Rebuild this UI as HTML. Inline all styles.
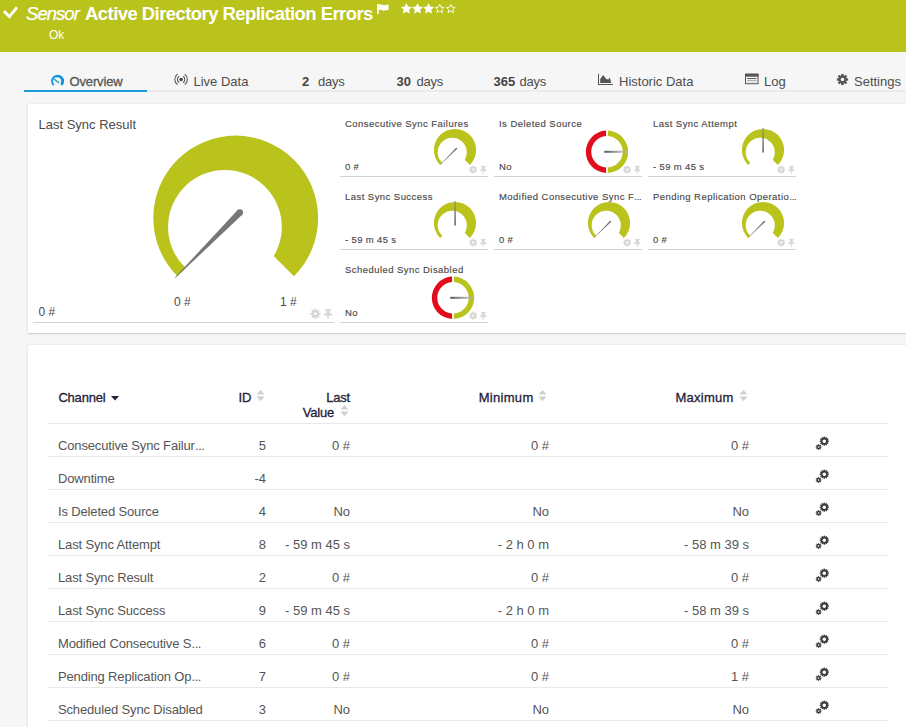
<!DOCTYPE html>
<html><head><meta charset="utf-8"><style>
*{margin:0;padding:0;box-sizing:border-box}
html,body{width:906px;height:727px;overflow:hidden;background:#f6f6f6;font-family:"Liberation Sans",sans-serif;}
.abs{position:absolute}
#hdr{position:absolute;left:0;top:0;width:906px;height:52px;background:#b9c31c}
.ht{position:absolute;color:#fff;white-space:nowrap;line-height:1}
.tab{position:absolute;top:75px;font-size:13px;color:#4d4d4d;white-space:nowrap;line-height:1}
.tab b{color:#444}
#tabline{position:absolute;left:24px;top:90px;width:882px;height:2px;background:#ebebeb}
#tabsel{position:absolute;left:24px;top:90px;width:123px;height:2px;background:#1a9ad6}
.panel{position:absolute;background:#fff;box-shadow:0 1px 1px rgba(0,0,0,0.12),0 0 3px rgba(0,0,0,0.09)}
.el2{letter-spacing:-0.2px}
.gt{position:absolute;font-size:9.5px;letter-spacing:0.45px;-webkit-text-stroke:0.15px #4a4a4a;color:#4a4a4a;white-space:nowrap;line-height:1}
.gv{position:absolute;font-size:9.5px;letter-spacing:0.35px;-webkit-text-stroke:0.15px #4a4a4a;color:#4a4a4a;white-space:nowrap;line-height:1}
.lbl{position:absolute;font-size:12px;color:#4a4a4a;white-space:nowrap;line-height:1}
.th{position:absolute;font-size:13px;letter-spacing:-0.2px;-webkit-text-stroke:0.3px #1f2237;color:#1f2237;white-space:nowrap;line-height:1}
.tr{position:absolute;left:48px;width:841px;height:33px;border-bottom:1px solid #e9e9e9}
.c{position:absolute;top:15px;font-size:13px;color:#555;white-space:nowrap;line-height:1}
.ch{left:10px;letter-spacing:-0.15px}
.el{letter-spacing:-0.5px;margin-left:0.3px}
.id{right:623px}
.lv{right:539px}
.mn{right:340px}
.mx{right:140px}
.gears{position:absolute;left:766px;top:12px}
</style></head><body>
<div id="hdr">
  <svg class="abs" style="left:3px;top:6px" width="17" height="13" viewBox="0 0 17 13"><path d="M0.9,5.0 L6.4,10.6 L14.0,1.4" fill="none" stroke="#fff" stroke-width="2.9"/></svg>
  <div class="ht" style="left:26px;top:5px;font-size:18.5px;font-style:italic;letter-spacing:-0.95px;-webkit-text-stroke:0.25px #fff">Sensor</div>
  <div class="ht" style="left:85px;top:5px;font-size:18.5px;font-weight:bold;letter-spacing:-0.56px">Active Directory Replication Errors</div>
  <svg class="abs" style="left:377px;top:4px" width="12" height="10" viewBox="0 0 12 10"><rect x="0" y="0" width="1.8" height="10" fill="#fff"/><path d="M1.8,0.5 C4,-0.3 6,1.8 8,1.2 C9.5,0.8 10.5,0.3 11.5,0.5 L11.5,6 C10,5.8 9,6.4 7.5,6.6 C5.5,6.9 4,5.4 1.8,6Z" fill="#fff"/></svg>
  <svg class="abs" style="left:401px;top:3px" width="57" height="11" viewBox="0 0 57 11">
    <path transform="translate(5.40,5.9)" d="M0.00,-5.30 L1.50,-2.06 L5.04,-1.64 L2.43,0.79 L3.12,4.29 L0.00,2.55 L-3.12,4.29 L-2.43,0.79 L-5.04,-1.64 L-1.50,-2.06Z" fill="#fff" stroke="#fff" stroke-width="0.5" stroke-linejoin="round"/><path transform="translate(16.50,5.9)" d="M0.00,-5.30 L1.50,-2.06 L5.04,-1.64 L2.43,0.79 L3.12,4.29 L0.00,2.55 L-3.12,4.29 L-2.43,0.79 L-5.04,-1.64 L-1.50,-2.06Z" fill="#fff" stroke="#fff" stroke-width="0.5" stroke-linejoin="round"/><path transform="translate(27.60,5.9)" d="M0.00,-5.30 L1.50,-2.06 L5.04,-1.64 L2.43,0.79 L3.12,4.29 L0.00,2.55 L-3.12,4.29 L-2.43,0.79 L-5.04,-1.64 L-1.50,-2.06Z" fill="#fff" stroke="#fff" stroke-width="0.5" stroke-linejoin="round"/><path transform="translate(38.70,5.9) scale(0.86)" d="M0.00,-5.30 L1.50,-2.06 L5.04,-1.64 L2.43,0.79 L3.12,4.29 L0.00,2.55 L-3.12,4.29 L-2.43,0.79 L-5.04,-1.64 L-1.50,-2.06Z" fill="none" stroke="#fff" stroke-width="1.1" stroke-linejoin="round"/><path transform="translate(49.80,5.9) scale(0.86)" d="M0.00,-5.30 L1.50,-2.06 L5.04,-1.64 L2.43,0.79 L3.12,4.29 L0.00,2.55 L-3.12,4.29 L-2.43,0.79 L-5.04,-1.64 L-1.50,-2.06Z" fill="none" stroke="#fff" stroke-width="1.1" stroke-linejoin="round"/>
  </svg>
  <div class="ht" style="left:49px;top:29px;font-size:12px">Ok</div>
</div>
<div id="tabline"></div><div id="tabsel"></div>
<svg class="abs" style="left:0;top:0" width="906" height="100">
 <path d="M57.65,81.15 L53.09,85.71 A6.45,6.45 0 1 1 62.21,85.71 Z " fill="#0d98d5"/><circle cx="57.05" cy="81.3" r="4.05" fill="#f6f6f6" fill="#0d98d5"/>
 <path d="M53.9,78.9 L58.6,82.6" stroke="#0d98d5" stroke-width="1.3" stroke-linecap="round"/>
 <g fill="none" stroke="#555" stroke-width="1.05"><path d="M179.14,76.26 A3.7,3.7 0 0 0 179.14,82.54 M183.06,76.26 A3.7,3.7 0 0 1 183.06,82.54 M177.49,74.24 A6.3,6.3 0 0 0 177.49,84.56 M184.71,74.24 A6.3,6.3 0 0 1 184.71,84.56 "/></g><circle cx="181.1" cy="79.4" r="1.75" fill="#444"/>
 <path d="M598,73.7 L599,73.7 L599,83.9 L612.8,83.9 L612.8,84.9 L598,84.9Z" fill="#555"/>
 <path d="M600.2,82.9 L600.2,78.9 L603.2,75 L606.4,79.2 L608.9,79.2 L609.8,77.2 L611.3,82.9Z" fill="#555"/>
 <rect x="745.5" y="74.2" width="12.5" height="9.5" fill="none" stroke="#555" stroke-width="1"/><rect x="745" y="73.7" width="13.5" height="3" fill="#555"/>
 <rect x="747" y="78.1" width="9.5" height="0.9" fill="#555"/><rect x="747" y="79.9" width="9.5" height="0.8" fill="#999"/><rect x="747" y="81.5" width="9.5" height="0.8" fill="#ccc"/>
 <g transform="translate(842.50,79.50)" fill="#555"><rect x="-1.15" y="-5.60" width="2.30" height="11.20" transform="rotate(0.00)"/><rect x="-1.15" y="-5.60" width="2.30" height="11.20" transform="rotate(45.00)"/><rect x="-1.15" y="-5.60" width="2.30" height="11.20" transform="rotate(90.00)"/><rect x="-1.15" y="-5.60" width="2.30" height="11.20" transform="rotate(135.00)"/><circle r="4.20"/><circle r="1.75" fill="#f6f6f6"/></g>
</svg>
<div class="tab" style="left:69.5px;letter-spacing:-0.15px;-webkit-text-stroke:0.3px #555;color:#555">Overview</div>
<div class="tab" style="left:193.5px">Live Data</div>
<div class="tab" style="left:302px"><b>2</b></div><div class="tab" style="left:318px;letter-spacing:-0.2px">days</div>
<div class="tab" style="left:396.5px"><b>30</b></div><div class="tab" style="left:416.5px;letter-spacing:-0.2px">days</div>
<div class="tab" style="left:493.5px"><b>365</b></div><div class="tab" style="left:519.5px;letter-spacing:-0.2px">days</div>
<div class="tab" style="left:619px">Historic Data</div>
<div class="tab" style="left:764px">Log</div>
<div class="tab" style="left:854px">Settings</div>

<div class="panel" style="left:28px;top:104px;width:900px;height:229px"></div>
<div class="lbl" style="left:38.5px;top:118px;font-size:13px">Last Sync Result</div>
<div class="lbl" style="left:38.5px;top:306px">0 #</div>
<div class="lbl" style="left:174px;top:296px">0 #</div>
<div class="lbl" style="left:280px;top:296px">1 #</div>
<svg class="abs" style="left:0;top:0" width="906" height="340"><defs><linearGradient id="hg" x1="0" x2="1" y1="0" y2="0"><stop offset="0" stop-color="#555"/><stop offset="1" stop-color="#bbb" stop-opacity="0.6"/></linearGradient><linearGradient id="vg" x1="0" x2="0" y1="1" y2="0"><stop offset="0" stop-color="#444"/><stop offset="1" stop-color="#999"/></linearGradient></defs><path d="M235.70,218.00 L177.43,276.27 A82.40,82.40 0 1 1 293.97,276.27 Z" fill="#b9c31c"/><circle cx="224.91" cy="226.90" r="56.86" fill="#fff"/><path d="M175.55,277.85 L242.14,214.82 L237.46,210.18 L175.05,277.35Z" fill="#777"/><circle cx="239.80" cy="212.50" r="3.30" fill="#777"/><g transform="translate(315.40,313.80)" fill="#d6d6d6"><rect x="-1.00" y="-5.00" width="2.00" height="10.00" transform="rotate(0.00)"/><rect x="-1.00" y="-5.00" width="2.00" height="10.00" transform="rotate(45.00)"/><rect x="-1.00" y="-5.00" width="2.00" height="10.00" transform="rotate(90.00)"/><rect x="-1.00" y="-5.00" width="2.00" height="10.00" transform="rotate(135.00)"/><circle r="3.50"/><circle r="1.45" fill="#fff"/></g><g transform="translate(328.10,313.80)" fill="#d6d6d6"><rect x="-2.90" y="-4.60" width="5.80" height="1.50"/><rect x="-1.80" y="-3.20" width="3.60" height="3.20"/><rect x="-3.80" y="-0.20" width="7.60" height="2.10"/><rect x="-0.70" y="1.90" width="1.40" height="3.20"/></g><rect x="33" y="322" width="301" height="1" fill="#d3d3d3"/><path d="M455.00,150.00 L440.08,164.92 A21.10,21.10 0 1 1 469.92,164.92 Z" fill="#b9c31c"/><circle cx="452.24" cy="152.28" r="14.56" fill="#fff"/><path d="M440.11,165.11 L456.97,149.06 L455.83,147.94 L439.89,164.89Z" fill="#777"/><circle cx="456.40" cy="148.50" r="0.80" fill="#777"/><g transform="translate(473.20,169.60)" fill="#d6d6d6"><rect x="-0.80" y="-4.00" width="1.60" height="8.00" transform="rotate(0.00)"/><rect x="-0.80" y="-4.00" width="1.60" height="8.00" transform="rotate(45.00)"/><rect x="-0.80" y="-4.00" width="1.60" height="8.00" transform="rotate(90.00)"/><rect x="-0.80" y="-4.00" width="1.60" height="8.00" transform="rotate(135.00)"/><circle r="2.80"/><circle r="1.16" fill="#fff"/></g><g transform="translate(483.36,169.60)" fill="#d6d6d6"><rect x="-2.32" y="-3.68" width="4.64" height="1.20"/><rect x="-1.44" y="-2.56" width="2.88" height="2.56"/><rect x="-3.04" y="-0.16" width="6.08" height="1.68"/><rect x="-0.56" y="1.52" width="1.12" height="2.56"/></g><rect x="340" y="176" width="148" height="1" fill="#d3d3d3"/><path d="M606.10,130.62 A21.2,21.2 0 0 0 606.10,172.98 L606.10,167.57 A15.8,15.8 0 0 1 606.10,136.03 Z" fill="#e30c1a"/><path d="M607.90,130.62 A21.2,21.2 0 0 1 607.90,172.98 L607.90,167.57 A15.8,15.8 0 0 0 607.90,136.03 Z" fill="#b9c31c"/><rect x="604.30" y="150.80" width="24" height="2" fill="url(#hg)"/><g transform="translate(627.20,169.60)" fill="#d6d6d6"><rect x="-0.80" y="-4.00" width="1.60" height="8.00" transform="rotate(0.00)"/><rect x="-0.80" y="-4.00" width="1.60" height="8.00" transform="rotate(45.00)"/><rect x="-0.80" y="-4.00" width="1.60" height="8.00" transform="rotate(90.00)"/><rect x="-0.80" y="-4.00" width="1.60" height="8.00" transform="rotate(135.00)"/><circle r="2.80"/><circle r="1.16" fill="#fff"/></g><g transform="translate(637.36,169.60)" fill="#d6d6d6"><rect x="-2.32" y="-3.68" width="4.64" height="1.20"/><rect x="-1.44" y="-2.56" width="2.88" height="2.56"/><rect x="-3.04" y="-0.16" width="6.08" height="1.68"/><rect x="-0.56" y="1.52" width="1.12" height="2.56"/></g><rect x="494" y="176" width="148" height="1" fill="#d3d3d3"/><path d="M763.00,150.00 L748.08,164.92 A21.10,21.10 0 1 1 777.92,164.92 Z" fill="#b9c31c"/><circle cx="760.24" cy="152.28" r="14.56" fill="#fff"/><rect x="762.45" y="128.00" width="1.3" height="24.5" fill="url(#vg)"/><g transform="translate(781.20,169.60)" fill="#d6d6d6"><rect x="-0.80" y="-4.00" width="1.60" height="8.00" transform="rotate(0.00)"/><rect x="-0.80" y="-4.00" width="1.60" height="8.00" transform="rotate(45.00)"/><rect x="-0.80" y="-4.00" width="1.60" height="8.00" transform="rotate(90.00)"/><rect x="-0.80" y="-4.00" width="1.60" height="8.00" transform="rotate(135.00)"/><circle r="2.80"/><circle r="1.16" fill="#fff"/></g><g transform="translate(791.36,169.60)" fill="#d6d6d6"><rect x="-2.32" y="-3.68" width="4.64" height="1.20"/><rect x="-1.44" y="-2.56" width="2.88" height="2.56"/><rect x="-3.04" y="-0.16" width="6.08" height="1.68"/><rect x="-0.56" y="1.52" width="1.12" height="2.56"/></g><rect x="648" y="176" width="148" height="1" fill="#d3d3d3"/><path d="M455.00,223.00 L440.08,237.92 A21.10,21.10 0 1 1 469.92,237.92 Z" fill="#b9c31c"/><circle cx="452.24" cy="225.28" r="14.56" fill="#fff"/><rect x="454.45" y="201.00" width="1.3" height="24.5" fill="url(#vg)"/><g transform="translate(473.20,242.60)" fill="#d6d6d6"><rect x="-0.80" y="-4.00" width="1.60" height="8.00" transform="rotate(0.00)"/><rect x="-0.80" y="-4.00" width="1.60" height="8.00" transform="rotate(45.00)"/><rect x="-0.80" y="-4.00" width="1.60" height="8.00" transform="rotate(90.00)"/><rect x="-0.80" y="-4.00" width="1.60" height="8.00" transform="rotate(135.00)"/><circle r="2.80"/><circle r="1.16" fill="#fff"/></g><g transform="translate(483.36,242.60)" fill="#d6d6d6"><rect x="-2.32" y="-3.68" width="4.64" height="1.20"/><rect x="-1.44" y="-2.56" width="2.88" height="2.56"/><rect x="-3.04" y="-0.16" width="6.08" height="1.68"/><rect x="-0.56" y="1.52" width="1.12" height="2.56"/></g><rect x="340" y="249" width="148" height="1" fill="#d3d3d3"/><path d="M609.00,223.00 L594.08,237.92 A21.10,21.10 0 1 1 623.92,237.92 Z" fill="#b9c31c"/><circle cx="606.24" cy="225.28" r="14.56" fill="#fff"/><path d="M594.11,238.11 L610.97,222.06 L609.83,220.94 L593.89,237.89Z" fill="#777"/><circle cx="610.40" cy="221.50" r="0.80" fill="#777"/><g transform="translate(627.20,242.60)" fill="#d6d6d6"><rect x="-0.80" y="-4.00" width="1.60" height="8.00" transform="rotate(0.00)"/><rect x="-0.80" y="-4.00" width="1.60" height="8.00" transform="rotate(45.00)"/><rect x="-0.80" y="-4.00" width="1.60" height="8.00" transform="rotate(90.00)"/><rect x="-0.80" y="-4.00" width="1.60" height="8.00" transform="rotate(135.00)"/><circle r="2.80"/><circle r="1.16" fill="#fff"/></g><g transform="translate(637.36,242.60)" fill="#d6d6d6"><rect x="-2.32" y="-3.68" width="4.64" height="1.20"/><rect x="-1.44" y="-2.56" width="2.88" height="2.56"/><rect x="-3.04" y="-0.16" width="6.08" height="1.68"/><rect x="-0.56" y="1.52" width="1.12" height="2.56"/></g><rect x="494" y="249" width="148" height="1" fill="#d3d3d3"/><path d="M763.00,223.00 L748.08,237.92 A21.10,21.10 0 1 1 777.92,237.92 Z" fill="#b9c31c"/><circle cx="760.24" cy="225.28" r="14.56" fill="#fff"/><path d="M748.11,238.11 L764.97,222.06 L763.83,220.94 L747.89,237.89Z" fill="#777"/><circle cx="764.40" cy="221.50" r="0.80" fill="#777"/><g transform="translate(781.20,242.60)" fill="#d6d6d6"><rect x="-0.80" y="-4.00" width="1.60" height="8.00" transform="rotate(0.00)"/><rect x="-0.80" y="-4.00" width="1.60" height="8.00" transform="rotate(45.00)"/><rect x="-0.80" y="-4.00" width="1.60" height="8.00" transform="rotate(90.00)"/><rect x="-0.80" y="-4.00" width="1.60" height="8.00" transform="rotate(135.00)"/><circle r="2.80"/><circle r="1.16" fill="#fff"/></g><g transform="translate(791.36,242.60)" fill="#d6d6d6"><rect x="-2.32" y="-3.68" width="4.64" height="1.20"/><rect x="-1.44" y="-2.56" width="2.88" height="2.56"/><rect x="-3.04" y="-0.16" width="6.08" height="1.68"/><rect x="-0.56" y="1.52" width="1.12" height="2.56"/></g><rect x="648" y="249" width="148" height="1" fill="#d3d3d3"/><path d="M452.10,276.62 A21.2,21.2 0 0 0 452.10,318.98 L452.10,313.57 A15.8,15.8 0 0 1 452.10,282.03 Z" fill="#e30c1a"/><path d="M453.90,276.62 A21.2,21.2 0 0 1 453.90,318.98 L453.90,313.57 A15.8,15.8 0 0 0 453.90,282.03 Z" fill="#b9c31c"/><rect x="450.30" y="296.80" width="24" height="2" fill="url(#hg)"/><g transform="translate(473.20,315.60)" fill="#d6d6d6"><rect x="-0.80" y="-4.00" width="1.60" height="8.00" transform="rotate(0.00)"/><rect x="-0.80" y="-4.00" width="1.60" height="8.00" transform="rotate(45.00)"/><rect x="-0.80" y="-4.00" width="1.60" height="8.00" transform="rotate(90.00)"/><rect x="-0.80" y="-4.00" width="1.60" height="8.00" transform="rotate(135.00)"/><circle r="2.80"/><circle r="1.16" fill="#fff"/></g><g transform="translate(483.36,315.60)" fill="#d6d6d6"><rect x="-2.32" y="-3.68" width="4.64" height="1.20"/><rect x="-1.44" y="-2.56" width="2.88" height="2.56"/><rect x="-3.04" y="-0.16" width="6.08" height="1.68"/><rect x="-0.56" y="1.52" width="1.12" height="2.56"/></g><rect x="340" y="322" width="148" height="1" fill="#d3d3d3"/></svg>
<div class="gt" style="left:345px;top:119px">Consecutive Sync Failures</div><div class="gv" style="left:345px;top:162px">0 #</div><div class="gt" style="left:499px;top:119px">Is Deleted Source</div><div class="gv" style="left:499px;top:162px">No</div><div class="gt" style="left:653px;top:119px">Last Sync Attempt</div><div class="gv" style="left:653px;top:162px">- 59 m 45 s</div><div class="gt" style="left:345px;top:192px">Last Sync Success</div><div class="gv" style="left:345px;top:235px">- 59 m 45 s</div><div class="gt" style="left:499px;top:192px">Modified Consecutive Sync F<span class="el2">...</span></div><div class="gv" style="left:499px;top:235px">0 #</div><div class="gt" style="left:653px;top:192px">Pending Replication Operatio<span class="el2">...</span></div><div class="gv" style="left:653px;top:235px">0 #</div><div class="gt" style="left:345px;top:265px">Scheduled Sync Disabled</div><div class="gv" style="left:345px;top:308px">No</div>

<div class="panel" style="left:28px;top:345px;width:900px;height:400px"></div>
<div class="th" style="left:58.4px;top:391px">Channel</div>
<svg class="abs" style="left:111px;top:396px" width="8" height="5" viewBox="0 0 8 5"><path d="M0,0 L8,0 L4,4.6Z" fill="#1f2237"/></svg>
<div class="th" style="left:238.5px;top:391px">ID</div>
<svg style="position:absolute;left:255.5px;top:390px" width="9" height="12" viewBox="0 0 9 12"><path d="M4.5,0 L8.5,4.6 L0.5,4.6Z M4.5,11.2 L8.5,6.6 L0.5,6.6Z" fill="#d0d0d0"/></svg>
<div class="th" style="right:556px;top:391px">Last</div>
<div class="th" style="right:572px;top:406px">Value</div>
<svg style="position:absolute;left:339.5px;top:405px" width="9" height="12" viewBox="0 0 9 12"><path d="M4.5,0 L8.5,4.6 L0.5,4.6Z M4.5,11.2 L8.5,6.6 L0.5,6.6Z" fill="#d0d0d0"/></svg>
<div class="th" style="left:478.7px;top:391px;letter-spacing:0.3px">Minimum</div>
<svg style="position:absolute;left:538px;top:390px" width="9" height="12" viewBox="0 0 9 12"><path d="M4.5,0 L8.5,4.6 L0.5,4.6Z M4.5,11.2 L8.5,6.6 L0.5,6.6Z" fill="#d0d0d0"/></svg>
<div class="th" style="left:675.5px;top:391px;letter-spacing:0.25px">Maximum</div>
<svg style="position:absolute;left:739px;top:390px" width="9" height="12" viewBox="0 0 9 12"><path d="M4.5,0 L8.5,4.6 L0.5,4.6Z M4.5,11.2 L8.5,6.6 L0.5,6.6Z" fill="#d0d0d0"/></svg>
<div class="abs" style="left:48px;top:423px;width:841px;height:1px;background:#e9e9e9"></div>
<div class="tr" style="top:424px"><span class="c ch">Consecutive Sync Failur<span class="el">...</span></span><span class="c id">5</span><span class="c lv">0 #</span><span class="c mn">0 #</span><span class="c mx">0 #</span><svg class="gears" width="16" height="14" viewBox="0 0 16 14"><g transform="translate(10.30,5.20)" fill="#3d3d3d"><rect x="-0.65" y="-4.60" width="1.30" height="9.20" transform="rotate(0.00)"/><rect x="-0.65" y="-4.60" width="1.30" height="9.20" transform="rotate(30.00)"/><rect x="-0.65" y="-4.60" width="1.30" height="9.20" transform="rotate(60.00)"/><rect x="-0.65" y="-4.60" width="1.30" height="9.20" transform="rotate(90.00)"/><rect x="-0.65" y="-4.60" width="1.30" height="9.20" transform="rotate(120.00)"/><rect x="-0.65" y="-4.60" width="1.30" height="9.20" transform="rotate(150.00)"/><circle r="3.60"/><circle r="1.70" fill="#fff"/></g><g transform="translate(4.60,11.00)" fill="#3d3d3d"><rect x="-0.50" y="-2.90" width="1.00" height="5.80" transform="rotate(0.00)"/><rect x="-0.50" y="-2.90" width="1.00" height="5.80" transform="rotate(45.00)"/><rect x="-0.50" y="-2.90" width="1.00" height="5.80" transform="rotate(90.00)"/><rect x="-0.50" y="-2.90" width="1.00" height="5.80" transform="rotate(135.00)"/><circle r="2.20"/><circle r="0.80" fill="#fff"/></g></svg></div><div class="tr" style="top:457px"><span class="c ch">Downtime</span><span class="c id">-4</span><span class="c lv"></span><span class="c mn"></span><span class="c mx"></span><svg class="gears" width="16" height="14" viewBox="0 0 16 14"><g transform="translate(10.30,5.20)" fill="#3d3d3d"><rect x="-0.65" y="-4.60" width="1.30" height="9.20" transform="rotate(0.00)"/><rect x="-0.65" y="-4.60" width="1.30" height="9.20" transform="rotate(30.00)"/><rect x="-0.65" y="-4.60" width="1.30" height="9.20" transform="rotate(60.00)"/><rect x="-0.65" y="-4.60" width="1.30" height="9.20" transform="rotate(90.00)"/><rect x="-0.65" y="-4.60" width="1.30" height="9.20" transform="rotate(120.00)"/><rect x="-0.65" y="-4.60" width="1.30" height="9.20" transform="rotate(150.00)"/><circle r="3.60"/><circle r="1.70" fill="#fff"/></g><g transform="translate(4.60,11.00)" fill="#3d3d3d"><rect x="-0.50" y="-2.90" width="1.00" height="5.80" transform="rotate(0.00)"/><rect x="-0.50" y="-2.90" width="1.00" height="5.80" transform="rotate(45.00)"/><rect x="-0.50" y="-2.90" width="1.00" height="5.80" transform="rotate(90.00)"/><rect x="-0.50" y="-2.90" width="1.00" height="5.80" transform="rotate(135.00)"/><circle r="2.20"/><circle r="0.80" fill="#fff"/></g></svg></div><div class="tr" style="top:490px"><span class="c ch">Is Deleted Source</span><span class="c id">4</span><span class="c lv">No</span><span class="c mn">No</span><span class="c mx">No</span><svg class="gears" width="16" height="14" viewBox="0 0 16 14"><g transform="translate(10.30,5.20)" fill="#3d3d3d"><rect x="-0.65" y="-4.60" width="1.30" height="9.20" transform="rotate(0.00)"/><rect x="-0.65" y="-4.60" width="1.30" height="9.20" transform="rotate(30.00)"/><rect x="-0.65" y="-4.60" width="1.30" height="9.20" transform="rotate(60.00)"/><rect x="-0.65" y="-4.60" width="1.30" height="9.20" transform="rotate(90.00)"/><rect x="-0.65" y="-4.60" width="1.30" height="9.20" transform="rotate(120.00)"/><rect x="-0.65" y="-4.60" width="1.30" height="9.20" transform="rotate(150.00)"/><circle r="3.60"/><circle r="1.70" fill="#fff"/></g><g transform="translate(4.60,11.00)" fill="#3d3d3d"><rect x="-0.50" y="-2.90" width="1.00" height="5.80" transform="rotate(0.00)"/><rect x="-0.50" y="-2.90" width="1.00" height="5.80" transform="rotate(45.00)"/><rect x="-0.50" y="-2.90" width="1.00" height="5.80" transform="rotate(90.00)"/><rect x="-0.50" y="-2.90" width="1.00" height="5.80" transform="rotate(135.00)"/><circle r="2.20"/><circle r="0.80" fill="#fff"/></g></svg></div><div class="tr" style="top:523px"><span class="c ch">Last Sync Attempt</span><span class="c id">8</span><span class="c lv">- 59 m 45 s</span><span class="c mn">- 2 h 0 m</span><span class="c mx">- 58 m 39 s</span><svg class="gears" width="16" height="14" viewBox="0 0 16 14"><g transform="translate(10.30,5.20)" fill="#3d3d3d"><rect x="-0.65" y="-4.60" width="1.30" height="9.20" transform="rotate(0.00)"/><rect x="-0.65" y="-4.60" width="1.30" height="9.20" transform="rotate(30.00)"/><rect x="-0.65" y="-4.60" width="1.30" height="9.20" transform="rotate(60.00)"/><rect x="-0.65" y="-4.60" width="1.30" height="9.20" transform="rotate(90.00)"/><rect x="-0.65" y="-4.60" width="1.30" height="9.20" transform="rotate(120.00)"/><rect x="-0.65" y="-4.60" width="1.30" height="9.20" transform="rotate(150.00)"/><circle r="3.60"/><circle r="1.70" fill="#fff"/></g><g transform="translate(4.60,11.00)" fill="#3d3d3d"><rect x="-0.50" y="-2.90" width="1.00" height="5.80" transform="rotate(0.00)"/><rect x="-0.50" y="-2.90" width="1.00" height="5.80" transform="rotate(45.00)"/><rect x="-0.50" y="-2.90" width="1.00" height="5.80" transform="rotate(90.00)"/><rect x="-0.50" y="-2.90" width="1.00" height="5.80" transform="rotate(135.00)"/><circle r="2.20"/><circle r="0.80" fill="#fff"/></g></svg></div><div class="tr" style="top:556px"><span class="c ch">Last Sync Result</span><span class="c id">2</span><span class="c lv">0 #</span><span class="c mn">0 #</span><span class="c mx">0 #</span><svg class="gears" width="16" height="14" viewBox="0 0 16 14"><g transform="translate(10.30,5.20)" fill="#3d3d3d"><rect x="-0.65" y="-4.60" width="1.30" height="9.20" transform="rotate(0.00)"/><rect x="-0.65" y="-4.60" width="1.30" height="9.20" transform="rotate(30.00)"/><rect x="-0.65" y="-4.60" width="1.30" height="9.20" transform="rotate(60.00)"/><rect x="-0.65" y="-4.60" width="1.30" height="9.20" transform="rotate(90.00)"/><rect x="-0.65" y="-4.60" width="1.30" height="9.20" transform="rotate(120.00)"/><rect x="-0.65" y="-4.60" width="1.30" height="9.20" transform="rotate(150.00)"/><circle r="3.60"/><circle r="1.70" fill="#fff"/></g><g transform="translate(4.60,11.00)" fill="#3d3d3d"><rect x="-0.50" y="-2.90" width="1.00" height="5.80" transform="rotate(0.00)"/><rect x="-0.50" y="-2.90" width="1.00" height="5.80" transform="rotate(45.00)"/><rect x="-0.50" y="-2.90" width="1.00" height="5.80" transform="rotate(90.00)"/><rect x="-0.50" y="-2.90" width="1.00" height="5.80" transform="rotate(135.00)"/><circle r="2.20"/><circle r="0.80" fill="#fff"/></g></svg></div><div class="tr" style="top:589px"><span class="c ch">Last Sync Success</span><span class="c id">9</span><span class="c lv">- 59 m 45 s</span><span class="c mn">- 2 h 0 m</span><span class="c mx">- 58 m 39 s</span><svg class="gears" width="16" height="14" viewBox="0 0 16 14"><g transform="translate(10.30,5.20)" fill="#3d3d3d"><rect x="-0.65" y="-4.60" width="1.30" height="9.20" transform="rotate(0.00)"/><rect x="-0.65" y="-4.60" width="1.30" height="9.20" transform="rotate(30.00)"/><rect x="-0.65" y="-4.60" width="1.30" height="9.20" transform="rotate(60.00)"/><rect x="-0.65" y="-4.60" width="1.30" height="9.20" transform="rotate(90.00)"/><rect x="-0.65" y="-4.60" width="1.30" height="9.20" transform="rotate(120.00)"/><rect x="-0.65" y="-4.60" width="1.30" height="9.20" transform="rotate(150.00)"/><circle r="3.60"/><circle r="1.70" fill="#fff"/></g><g transform="translate(4.60,11.00)" fill="#3d3d3d"><rect x="-0.50" y="-2.90" width="1.00" height="5.80" transform="rotate(0.00)"/><rect x="-0.50" y="-2.90" width="1.00" height="5.80" transform="rotate(45.00)"/><rect x="-0.50" y="-2.90" width="1.00" height="5.80" transform="rotate(90.00)"/><rect x="-0.50" y="-2.90" width="1.00" height="5.80" transform="rotate(135.00)"/><circle r="2.20"/><circle r="0.80" fill="#fff"/></g></svg></div><div class="tr" style="top:622px"><span class="c ch">Modified Consecutive S<span class="el">...</span></span><span class="c id">6</span><span class="c lv">0 #</span><span class="c mn">0 #</span><span class="c mx">0 #</span><svg class="gears" width="16" height="14" viewBox="0 0 16 14"><g transform="translate(10.30,5.20)" fill="#3d3d3d"><rect x="-0.65" y="-4.60" width="1.30" height="9.20" transform="rotate(0.00)"/><rect x="-0.65" y="-4.60" width="1.30" height="9.20" transform="rotate(30.00)"/><rect x="-0.65" y="-4.60" width="1.30" height="9.20" transform="rotate(60.00)"/><rect x="-0.65" y="-4.60" width="1.30" height="9.20" transform="rotate(90.00)"/><rect x="-0.65" y="-4.60" width="1.30" height="9.20" transform="rotate(120.00)"/><rect x="-0.65" y="-4.60" width="1.30" height="9.20" transform="rotate(150.00)"/><circle r="3.60"/><circle r="1.70" fill="#fff"/></g><g transform="translate(4.60,11.00)" fill="#3d3d3d"><rect x="-0.50" y="-2.90" width="1.00" height="5.80" transform="rotate(0.00)"/><rect x="-0.50" y="-2.90" width="1.00" height="5.80" transform="rotate(45.00)"/><rect x="-0.50" y="-2.90" width="1.00" height="5.80" transform="rotate(90.00)"/><rect x="-0.50" y="-2.90" width="1.00" height="5.80" transform="rotate(135.00)"/><circle r="2.20"/><circle r="0.80" fill="#fff"/></g></svg></div><div class="tr" style="top:655px"><span class="c ch">Pending Replication Op<span class="el">...</span></span><span class="c id">7</span><span class="c lv">0 #</span><span class="c mn">0 #</span><span class="c mx">1 #</span><svg class="gears" width="16" height="14" viewBox="0 0 16 14"><g transform="translate(10.30,5.20)" fill="#3d3d3d"><rect x="-0.65" y="-4.60" width="1.30" height="9.20" transform="rotate(0.00)"/><rect x="-0.65" y="-4.60" width="1.30" height="9.20" transform="rotate(30.00)"/><rect x="-0.65" y="-4.60" width="1.30" height="9.20" transform="rotate(60.00)"/><rect x="-0.65" y="-4.60" width="1.30" height="9.20" transform="rotate(90.00)"/><rect x="-0.65" y="-4.60" width="1.30" height="9.20" transform="rotate(120.00)"/><rect x="-0.65" y="-4.60" width="1.30" height="9.20" transform="rotate(150.00)"/><circle r="3.60"/><circle r="1.70" fill="#fff"/></g><g transform="translate(4.60,11.00)" fill="#3d3d3d"><rect x="-0.50" y="-2.90" width="1.00" height="5.80" transform="rotate(0.00)"/><rect x="-0.50" y="-2.90" width="1.00" height="5.80" transform="rotate(45.00)"/><rect x="-0.50" y="-2.90" width="1.00" height="5.80" transform="rotate(90.00)"/><rect x="-0.50" y="-2.90" width="1.00" height="5.80" transform="rotate(135.00)"/><circle r="2.20"/><circle r="0.80" fill="#fff"/></g></svg></div><div class="tr" style="top:688px"><span class="c ch">Scheduled Sync Disabled</span><span class="c id">3</span><span class="c lv">No</span><span class="c mn">No</span><span class="c mx">No</span><svg class="gears" width="16" height="14" viewBox="0 0 16 14"><g transform="translate(10.30,5.20)" fill="#3d3d3d"><rect x="-0.65" y="-4.60" width="1.30" height="9.20" transform="rotate(0.00)"/><rect x="-0.65" y="-4.60" width="1.30" height="9.20" transform="rotate(30.00)"/><rect x="-0.65" y="-4.60" width="1.30" height="9.20" transform="rotate(60.00)"/><rect x="-0.65" y="-4.60" width="1.30" height="9.20" transform="rotate(90.00)"/><rect x="-0.65" y="-4.60" width="1.30" height="9.20" transform="rotate(120.00)"/><rect x="-0.65" y="-4.60" width="1.30" height="9.20" transform="rotate(150.00)"/><circle r="3.60"/><circle r="1.70" fill="#fff"/></g><g transform="translate(4.60,11.00)" fill="#3d3d3d"><rect x="-0.50" y="-2.90" width="1.00" height="5.80" transform="rotate(0.00)"/><rect x="-0.50" y="-2.90" width="1.00" height="5.80" transform="rotate(45.00)"/><rect x="-0.50" y="-2.90" width="1.00" height="5.80" transform="rotate(90.00)"/><rect x="-0.50" y="-2.90" width="1.00" height="5.80" transform="rotate(135.00)"/><circle r="2.20"/><circle r="0.80" fill="#fff"/></g></svg></div>
</body></html>
